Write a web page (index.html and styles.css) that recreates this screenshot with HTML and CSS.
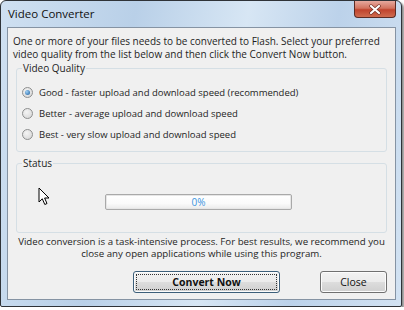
FILE: index.html
```html
<!DOCTYPE html>
<html lang="en">
<head>
  <meta charset="UTF-8" />
  <title>Video Converter</title>
  <link rel="stylesheet" href="styles.css">
</head>
<body>
  <div class="window">
    <div class="titlebar">
      <span class="title">Video Converter</span>
      <div class="close-x">
        <svg width="14" height="11" viewBox="0 0 14 11">
          <path d="M3 2 L11 9 M11 2 L3 9" stroke="#6a2a20" stroke-width="3.4" stroke-linecap="round" />
          <path d="M3 2 L11 9 M11 2 L3 9" stroke="#fff" stroke-width="2.2" stroke-linecap="round" />
        </svg>
      </div>
    </div>

    <div class="client">
      <p class="intro">One or more of your files needs to be converted to Flash. Select your preferred video quality from the list below and then click the Convert Now button.</p>

      <fieldset class="group quality">
        <legend>Video Quality</legend>
        <label class="option"><span class="radio checked"></span>Good - faster upload and download speed (recommended)</label>
        <label class="option"><span class="radio"></span>Better - average upload and download speed</label>
        <label class="option"><span class="radio"></span>Best - very slow upload and download speed</label>
      </fieldset>

      <fieldset class="group status">
        <legend>Status</legend>
        <div class="status-row">
          <svg class="pointer" width="13" height="19" viewBox="0 0 13 19">
            <path d="M1 1 L1 15 L4.3 11.8 L6.8 17.5 L9 16.5 L6.6 11 L11 11 Z" fill="#fff" stroke="#000" stroke-width="1" stroke-linejoin="round" />
          </svg>
          <div class="progress"><span>0%</span></div>
        </div>
      </fieldset>

      <p class="note">Video conversion is a task-intensive process. For best results, we recommend you close any open applications while using this program.</p>

      <div class="buttons">
        <button class="btn primary"><span>Convert Now</span></button>
        <button class="btn">Close</button>
      </div>
    </div>
  </div>
</body>
</html>
```

FILE: styles.css
```css
* {
  box-sizing: border-box;
}

body {
  margin: 0;
  background: #fff;
  font-family: 'Open Sans', 'Noto Sans', sans-serif;
  font-size: 10px;
  color: #1e1e1e;
}

.window {
  width: 402px;
  height: 307px;
  border: 1px solid #2f3338;
  border-radius: 6px 6px 2px 2px;
  background: linear-gradient(100deg, #cfe0f1 0%, #b9d0e8 30%, #d7e6f4 55%, #bcd2ea 75%, #d2e2f2 100%);
  box-shadow: 2px 2px 2px rgba(0, 0, 0, 0.45);
  padding: 0 5px 6px 6px;
  display: flex;
  flex-direction: column;
}

.titlebar {
  height: 26px;
  display: flex;
  justify-content: space-between;
  align-items: flex-start;
}

.title {
  font-size: 11.5px;
  color: #111;
  margin-top: 5px;
  margin-left: 1px;
}

.close-x {
  width: 42px;
  height: 17px;
  border: 1px solid #5b2b24;
  border-top: none;
  border-radius: 0 0 4px 4px;
  background: linear-gradient(#e6a99e, #d2735f 45%, #c0432d 55%, #cf6b4f);
  display: flex;
  justify-content: center;
  align-items: center;
}

.client {
  flex: 1;
  background: #f0f0f0;
  border: 1px solid #8593a3;
  padding: 0 8px 0 8px;
}

.intro {
  margin: 7px 0 0 -3px;
  line-height: 13px;
}

.group {
  margin: 0;
  border: 1px solid #d5dfe5;
  border-radius: 3px;
  padding: 0 0 0 5px;
}

.group legend {
  padding: 0 1px;
  line-height: 12px;
  color: #1e1e1e;
}

.quality {
  margin-top: 1px;
  height: 90px;
  padding-top: 8px;
}

.option {
  display: flex;
  align-items: center;
  height: 21px;
  gap: 6px;
  font-size: 9.5px;
}

.radio {
  width: 11px;
  height: 11px;
  border-radius: 50%;
  border: 1px solid #8e8f8f;
  background: radial-gradient(circle at 40% 35%, #f4f4f4, #d3d3d3);
  display: flex;
  justify-content: center;
  align-items: center;
}

.radio.checked::after {
  content: "";
  width: 5px;
  height: 5px;
  border-radius: 50%;
  background: radial-gradient(circle at 35% 35%, #9fd0f5, #1a5c9e);
}

.status {
  margin-top: 5px;
  height: 76px;
}

.status-row {
  display: flex;
  align-items: flex-start;
  padding-top: 18px;
}

.pointer {
  margin-left: 16px;
}

.progress {
  margin-left: 54px;
  margin-top: 7px;
  width: 187px;
  height: 16px;
  border: 1px solid #a9a9a9;
  border-radius: 2px;
  background: linear-gradient(#ffffff, #fafafa 60%, #eaeaea);
  box-shadow: inset 0 0 0 1px #e6e6e6;
  display: flex;
  justify-content: center;
  align-items: center;
  color: #3a94e0;
}

.note {
  margin: 3px 0 0;
  text-align: center;
  line-height: 12px;
  font-size: 9.7px;
}

.buttons {
  display: flex;
  justify-content: flex-end;
  gap: 40px;
  margin-top: 11px;
}

.btn {
  height: 22px;
  width: 67px;
  font-family: inherit;
  font-size: 10.5px;
  color: #111;
  border: 1px solid #707070;
  border-radius: 3px;
  background: linear-gradient(#f2f2f2, #ebebeb 50%, #dddddd 51%, #cfcfcf);
  box-shadow: inset 0 0 0 1px #fcfcfc;
  padding: 0;
}

.btn.primary {
  width: 147px;
  font-weight: bold;
  border-color: #3c5f7a;
  padding: 2px;
}

.btn.primary span {
  display: flex;
  height: 100%;
  justify-content: center;
  align-items: center;
  border: 1px dotted #333;
}
```
